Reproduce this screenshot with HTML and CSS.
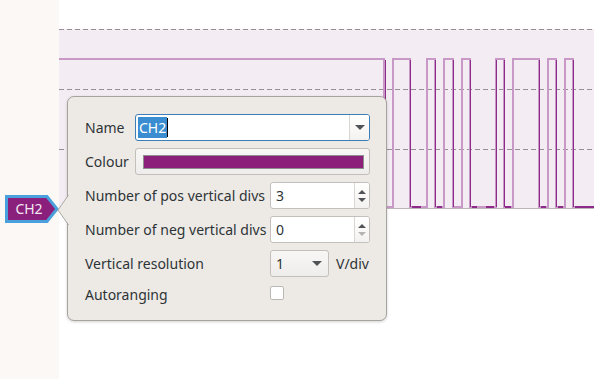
FILE: index.html
```html
<!DOCTYPE html>
<html>
<head>
<meta charset="utf-8">
<link rel="stylesheet" href="styles.css">
</head>
<body>
<div class="app">
  <aside class="side"></aside>
  <main class="view">
    <svg class="trace" width="535" height="379" viewBox="0 0 535 379">
      <rect x="0" y="29" width="535" height="180" fill="#f3ecf3"/>
      <g stroke="#9a8f98" stroke-width="1" stroke-dasharray="5 3">
        <line x1="0" y1="29.5" x2="535" y2="29.5"/>
        <line x1="0" y1="89.5" x2="535" y2="89.5"/>
        <line x1="0" y1="149.5" x2="535" y2="149.5"/>
      </g>
      <line x1="0" y1="208.5" x2="535" y2="208.5" stroke="#bcb6bb" stroke-width="1"/>
      <polyline fill="none" stroke="#c899c6" stroke-width="2"
        points="0,59 325,59 325,207 334,207 334,59 351,59 351,207 368,207 368,59 376,59 376,207 385,207 385,59 394,59 394,207 403,207 403,59 411,59 411,207 437,207 437,59 445,59 445,207 454,207 454,59 480,59 480,207 489,207 489,59 497,59 497,207 506,207 506,59 514,59 514,207 535,207"/>
      <g stroke="#8e2a8a" stroke-width="1">
        <line x1="326.5" y1="60" x2="326.5" y2="207"/>
        <line x1="351.5" y1="60" x2="351.5" y2="207"/>
        <line x1="376.5" y1="60" x2="376.5" y2="207"/>
        <line x1="394.5" y1="60" x2="394.5" y2="207"/>
        <line x1="411.5" y1="60" x2="411.5" y2="207"/>
        <line x1="437.5" y1="60" x2="437.5" y2="207"/>
        <line x1="445.5" y1="60" x2="445.5" y2="207"/>
        <line x1="480.5" y1="60" x2="480.5" y2="207"/>
        <line x1="497.5" y1="60" x2="497.5" y2="207"/>
        <line x1="514.5" y1="60" x2="514.5" y2="207"/>
      </g>
      <g stroke="#8e2a8a" stroke-width="2">
        <line x1="353" y1="207" x2="362" y2="207"/>
        <line x1="378" y1="207" x2="383" y2="207"/>
        <line x1="413" y1="207" x2="418" y2="207"/>
        <line x1="427" y1="207" x2="435" y2="207"/>
        <line x1="446" y1="207" x2="452" y2="207"/>
        <line x1="482" y1="207" x2="487" y2="207"/>
        <line x1="499" y1="207" x2="504" y2="207"/>
        <line x1="516" y1="207" x2="535" y2="207"/>
      </g>
    </svg>
  </main>

  <div class="tag">
    <svg class="tag-shape" width="54" height="28" viewBox="0 0 54 28">
      <polygon points="1.5,1.5 42,1.5 52,14 42,26.5 1.5,26.5" fill="#8a1f7c" stroke="#4aa0dc" stroke-width="3" stroke-linejoin="miter"/>
    </svg>
    <span class="tag-text">CH2</span>
  </div>

  <div class="popover">
    <svg class="pop-arrow" width="12" height="30" viewBox="0 0 12 30">
      <polygon points="12,0 1,15 12,30" fill="#edeae6"/>
      <polyline points="11.5,0 1,15 11.5,30" fill="none" stroke="#aaa6a2" stroke-width="1"/>
    </svg>
    <div class="form">
      <label class="lbl">Name</label>
      <div class="field combo-entry focused wide">
        <span class="entry-text"><span class="sel">CH2</span><span class="caret"></span></span>
        <span class="combo-btn"><span class="tri-down"></span></span>
      </div>

      <label class="lbl">Colour</label>
      <div class="field colour-btn wide">
        <span class="swatch"></span>
      </div>

      <label class="lbl long">Number of pos vertical divs</label>
      <div class="field spin">
        <span class="entry-text">3</span>
        <span class="spin-btns"><span class="tri-up"></span><span class="tri-down small"></span></span>
      </div>

      <label class="lbl long">Number of neg vertical divs</label>
      <div class="field spin">
        <span class="entry-text">0</span>
        <span class="spin-btns"><span class="tri-up"></span><span class="tri-down small dim"></span></span>
      </div>

      <label class="lbl long">Vertical resolution</label>
      <div class="res-row">
        <div class="field combo">
          <span class="entry-text">1</span>
          <span class="tri-down"></span>
        </div>
        <span class="unit">V/div</span>
      </div>

      <label class="lbl long last">Autoranging</label>
      <div class="check-cell"><span class="checkbox"></span></div>
    </div>
  </div>
</div>
</body>
</html>
```

FILE: styles.css
```css
* { box-sizing: border-box; }

html, body {
  margin: 0;
  padding: 0;
  background: #ffffff;
}

body {
  font-family: "Noto Sans", "DejaVu Sans", sans-serif;
  font-size: 14px;
  color: #2e3436;
}

.app {
  position: relative;
  width: 594px;
  height: 379px;
  display: flex;
  overflow: hidden;
}

.side {
  width: 59px;
  flex: none;
  background: #fbf8f6;
}

.view {
  flex: 1;
  background: #ffffff;
}

.trace {
  display: block;
}

/* channel tag */
.tag {
  position: absolute;
  left: 5px;
  top: 195px;
  width: 54px;
  height: 28px;
}

.tag-shape {
  position: absolute;
  left: 0;
  top: 0;
}

.tag-text {
  position: absolute;
  left: 4px;
  top: 0;
  width: 40px;
  height: 28px;
  line-height: 28px;
  text-align: center;
  color: #f3e9f2;
  font-size: 14px;
}

/* popover */
.popover {
  position: absolute;
  left: 67px;
  top: 96px;
  width: 320px;
  height: 225px;
  background: #edeae6;
  border: 1px solid #a7a39f;
  border-radius: 7px;
  box-shadow: 0 1px 3px rgba(0, 0, 0, 0.18);
  padding: 17px 17px 0 17px;
}

.pop-arrow {
  position: absolute;
  left: -11px;
  top: 98px;
}

.form {
  display: grid;
  grid-template-columns: 50px 135px 100px;
  grid-auto-rows: 27px;
  row-gap: 7px;
  align-items: center;
}

.lbl {
  white-space: nowrap;
  line-height: 20px;
}

.lbl.long {
  grid-column: 1 / 3;
}

.lbl.last {
  margin-top: -5px;
}

.field {
  height: 27px;
  background: #ffffff;
  border: 1px solid #c3bfbb;
  border-radius: 3px;
  display: flex;
  align-items: stretch;
  position: relative;
}

.wide {
  grid-column: 2 / 4;
}

.focused {
  border-color: #3b7db6;
}

.entry-text {
  flex: 1;
  display: flex;
  align-items: center;
  padding-left: 5px;
  line-height: 20px;
}

.combo-entry .entry-text {
  padding-left: 2px;
}

.sel {
  background: #3a8dd0;
  color: #ffffff;
  padding: 0 1px;
  line-height: 21px;
}

.caret {
  display: inline-block;
  width: 1px;
  height: 19px;
  background: #000000;
}

.combo-btn {
  width: 20px;
  border-left: 1px solid #d9d6d2;
  background: linear-gradient(#ffffff, #f3f2f0);
  border-radius: 0 2px 2px 0;
  display: flex;
  align-items: center;
  justify-content: center;
}

.tri-down {
  width: 0;
  height: 0;
  border-left: 5px solid transparent;
  border-right: 5px solid transparent;
  border-top: 5px solid #505456;
}

.tri-down.small {
  border-left-width: 4px;
  border-right-width: 4px;
  border-top-width: 4px;
}

.tri-down.dim {
  border-top-color: #b5b3b1;
}

.tri-up {
  width: 0;
  height: 0;
  border-left: 4px solid transparent;
  border-right: 4px solid transparent;
  border-bottom: 4px solid #505456;
}

.colour-btn {
  background: linear-gradient(#f8f7f6, #efedeb);
  border-color: #c3bfbb;
  padding: 6px 5px 5px 7px;
}

.swatch {
  flex: 1;
  background: #8b1f7a;
  border: 1px solid #8e8e8e;
}

.spin {
  width: 100px;
}

.spin-btns {
  width: 15px;
  border-left: 1px solid #d9d6d2;
  display: flex;
  flex-direction: column;
  align-items: center;
  justify-content: center;
  gap: 4px;
  background: linear-gradient(#ffffff, #f3f2f0);
  border-radius: 0 2px 2px 0;
}

.res-row {
  display: flex;
  align-items: center;
  gap: 7px;
}

.combo {
  width: 59px;
  background: linear-gradient(#f8f7f6, #efedeb);
  align-items: center;
  padding-right: 6px;
}

.unit {
  line-height: 20px;
}

.check-cell {
  display: flex;
  align-items: flex-start;
  height: 27px;
  padding-top: 2px;
}

.checkbox {
  width: 14px;
  height: 14px;
  background: #ffffff;
  border: 1px solid #bcb8b4;
  border-radius: 2px;
}
```
